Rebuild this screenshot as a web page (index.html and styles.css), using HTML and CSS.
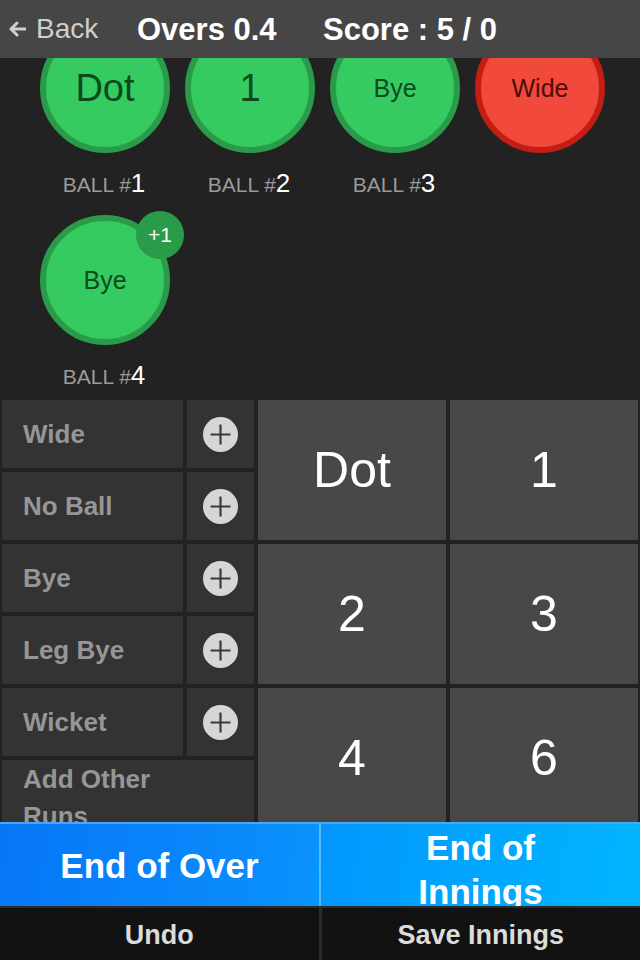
FILE: index.html
```html
<!DOCTYPE html>
<html lang="en">
<head>
    <meta charset="UTF-8">
    <meta name="viewport" content="width=device-width, initial-scale=1.0">
    <title>Scorer</title>
    <link rel="stylesheet" href="styles.css">
</head>
<body>
    <header class="topbar">
        <a class="back" href="#">
            <svg class="back-arrow" width="18" height="16" viewBox="0 0 18 16">
                <path d="M17 8H3M9 2L3 8l6 6" fill="none" stroke="#cfcfcf" stroke-width="3" stroke-linecap="round" stroke-linejoin="round"/>
            </svg>
            Back
        </a>
        <span class="overs">Overs 0.4</span>
        <span class="score">Score : 5 / 0</span>
    </header>

    <main class="scroller">
        <section class="balls">
            <div class="ball-item">
                <div class="ball ball-big">Dot</div>
                <div class="ball-label">BALL #<b>1</b></div>
            </div>
            <div class="ball-item">
                <div class="ball ball-big">1</div>
                <div class="ball-label">BALL #<b>2</b></div>
            </div>
            <div class="ball-item">
                <div class="ball">Bye</div>
                <div class="ball-label">BALL #<b>3</b></div>
            </div>
            <div class="ball-item">
                <div class="ball ball-extra">Wide</div>
            </div>
            <div class="ball-item">
                <div class="ball">Bye<span class="badge">+1</span></div>
                <div class="ball-label">BALL #<b>4</b></div>
            </div>
        </section>

        <section class="panel">
            <div class="extras">
                <div class="extra-row">
                    <div class="extra-name">Wide</div>
                    <div class="extra-add"><svg width="35" height="35" viewBox="0 0 35 35"><circle cx="17.5" cy="17.5" r="17.5" fill="#d6d6d6"/><path d="M17.5 7.5v20M7.5 17.5h20" stroke="#3a3a3a" stroke-width="2.2"/></svg></div>
                </div>
                <div class="extra-row">
                    <div class="extra-name">No Ball</div>
                    <div class="extra-add"><svg width="35" height="35" viewBox="0 0 35 35"><circle cx="17.5" cy="17.5" r="17.5" fill="#d6d6d6"/><path d="M17.5 7.5v20M7.5 17.5h20" stroke="#3a3a3a" stroke-width="2.2"/></svg></div>
                </div>
                <div class="extra-row">
                    <div class="extra-name">Bye</div>
                    <div class="extra-add"><svg width="35" height="35" viewBox="0 0 35 35"><circle cx="17.5" cy="17.5" r="17.5" fill="#d6d6d6"/><path d="M17.5 7.5v20M7.5 17.5h20" stroke="#3a3a3a" stroke-width="2.2"/></svg></div>
                </div>
                <div class="extra-row">
                    <div class="extra-name">Leg Bye</div>
                    <div class="extra-add"><svg width="35" height="35" viewBox="0 0 35 35"><circle cx="17.5" cy="17.5" r="17.5" fill="#d6d6d6"/><path d="M17.5 7.5v20M7.5 17.5h20" stroke="#3a3a3a" stroke-width="2.2"/></svg></div>
                </div>
                <div class="extra-row">
                    <div class="extra-name">Wicket</div>
                    <div class="extra-add"><svg width="35" height="35" viewBox="0 0 35 35"><circle cx="17.5" cy="17.5" r="17.5" fill="#d6d6d6"/><path d="M17.5 7.5v20M7.5 17.5h20" stroke="#3a3a3a" stroke-width="2.2"/></svg></div>
                </div>
                <div class="extra-other">Add Other Runs</div>
            </div>
            <div class="runs">
                <div class="run">Dot</div>
                <div class="run">1</div>
                <div class="run">2</div>
                <div class="run">3</div>
                <div class="run">4</div>
                <div class="run">6</div>
            </div>
        </section>
    </main>

    <footer class="footer">
        <div class="actions">
            <div class="action">End of Over</div>
            <div class="action">End of Innings</div>
        </div>
        <div class="secondary">
            <div class="sec-btn">Undo</div>
            <div class="sec-btn">Save Innings</div>
        </div>
    </footer>
</body>
</html>
```

FILE: styles.css
```css
body {
    margin: 0;
    height: 960px;
    display: flex;
    flex-direction: column;
    overflow: hidden;
    background-color: #222222;
    font-family: 'Liberation Sans', Arial, sans-serif;
    color: #ffffff;
}

/* top bar */
.topbar {
    height: 58px;
    flex-shrink: 0;
    display: flex;
    align-items: center;
    padding-left: 8px;
    background-color: #464646;
    position: relative;
    z-index: 2;
}

.back {
    display: flex;
    align-items: center;
    color: #cfcfcf;
    text-decoration: none;
    font-size: 28px;
    width: 129px;
}

.back-arrow {
    margin-right: 10px;
}

.overs,
.score {
    font-weight: bold;
    font-size: 31px;
    padding-top: 2px;
}

.overs {
    width: 186px;
}

/* scrolled content */
.scroller {
    flex: 1;
    overflow: hidden;
}

.balls {
    display: grid;
    grid-template-columns: repeat(4, 130px);
    column-gap: 15px;
    row-gap: 16px;
    padding-left: 40px;
    margin-top: -35px;
}

.ball-item {
    display: flex;
    flex-direction: column;
    align-items: center;
}

.ball {
    position: relative;
    width: 130px;
    height: 130px;
    box-sizing: border-box;
    border-radius: 50%;
    border: 6px solid #2a9b49;
    background-color: #35cb60;
    color: #0b4a1c;
    font-size: 25px;
    display: flex;
    align-items: center;
    justify-content: center;
}

.ball-big {
    font-size: 38px;
}

.ball-extra {
    border-color: #c21e14;
    background-color: #f2493d;
    color: #4c0c08;
}

.badge {
    position: absolute;
    left: 90px;
    top: -10px;
    width: 48px;
    height: 48px;
    border-radius: 50%;
    background-color: #2a9b49;
    color: #ffffff;
    font-size: 21px;
    display: flex;
    align-items: center;
    justify-content: center;
}

.ball-label {
    margin-top: 16px;
    margin-right: 2px;
    line-height: 28px;
    font-size: 21px;
    color: #9a9a9a;
}

.ball-label b {
    font-weight: normal;
    font-size: 26px;
    color: #ffffff;
}

/* scoring panel */
.panel {
    display: grid;
    grid-template-columns: 252px 1fr;
    column-gap: 4px;
    padding: 0 2px;
    margin-top: 9px;
}

.extras {
    display: flex;
    flex-direction: column;
    gap: 4px;
}

.extra-row {
    display: grid;
    grid-template-columns: 181px 67px;
    column-gap: 4px;
    height: 68px;
}

.extra-name,
.extra-add,
.extra-other {
    background-color: #333333;
    display: flex;
    align-items: center;
}

.extra-name,
.extra-other {
    padding-left: 21px;
    font-weight: bold;
    font-size: 26px;
    color: #969696;
}

.extra-add {
    justify-content: center;
}

.extra-add svg {
    margin-left: -1px;
}

.extra-other {
    height: 68px;
    box-sizing: border-box;
    padding-top: 7px;
    line-height: 37px;
    padding-right: 60px;
}

.runs {
    display: grid;
    grid-template-columns: 1fr 1fr;
    grid-auto-rows: 140px;
    gap: 4px;
}

.run {
    background-color: #484848;
    display: flex;
    align-items: center;
    justify-content: center;
    font-size: 50px;
    color: #ffffff;
}

/* footer */
.footer {
    flex-shrink: 0;
    height: 138px;
    background-color: #2b2b2b;
}

.actions {
    height: 82px;
    display: flex;
    border-top: 2px solid #4aa6f2;
    background: linear-gradient(100deg, #0776f6 0%, #0a90fd 48%, #0199fd 52%, #02b5fe 100%);
    overflow: hidden;
}

.action {
    flex: 1;
    box-sizing: border-box;
    padding: 2px 48px 0;
    display: flex;
    align-items: safe center;
    justify-content: center;
    text-align: center;
    font-weight: bold;
    font-size: 35px;
    line-height: 44px;
}

.action + .action {
    border-left: 2px solid #55bbff;
}

.secondary {
    height: 52px;
    margin-top: 2px;
    display: flex;
    gap: 3px;
}

.sec-btn {
    flex: 1;
    padding-top: 3px;
    background-color: #121212;
    display: flex;
    align-items: center;
    justify-content: center;
    font-weight: bold;
    font-size: 27px;
    color: #dcdcdc;
}
```
